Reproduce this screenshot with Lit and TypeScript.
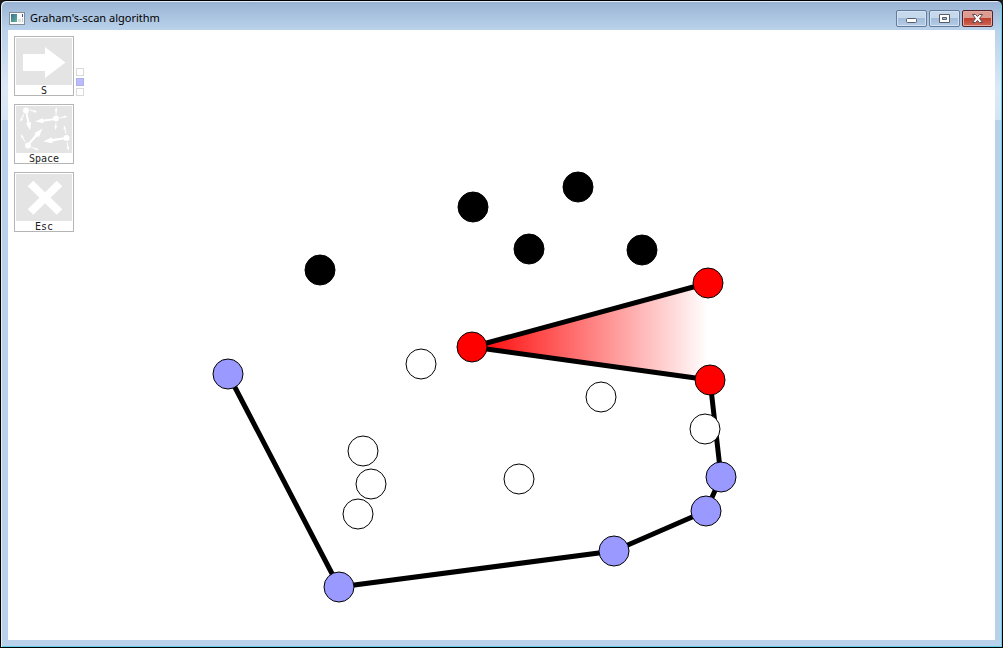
import { LitElement, html, svg, css } from "lit";
import { customElement, state } from "lit/decorators.js";

type Kind = "pending" | "active" | "hull" | "discarded";
interface Point { x: number; y: number; kind: Kind; }

const POINTS: Point[] = [
  { x: 465, y: 177, kind: "pending" },
  { x: 570, y: 157, kind: "pending" },
  { x: 521, y: 219, kind: "pending" },
  { x: 634, y: 220, kind: "pending" },
  { x: 312, y: 240, kind: "pending" },
  { x: 413, y: 334, kind: "discarded" },
  { x: 593, y: 367, kind: "discarded" },
  { x: 697, y: 399, kind: "discarded" },
  { x: 355, y: 421, kind: "discarded" },
  { x: 363, y: 454, kind: "discarded" },
  { x: 350, y: 484, kind: "discarded" },
  { x: 511, y: 449, kind: "discarded" },
  { x: 220, y: 344, kind: "hull" },
  { x: 331, y: 557, kind: "hull" },
  { x: 606, y: 521, kind: "hull" },
  { x: 698, y: 481, kind: "hull" },
  { x: 713, y: 447, kind: "hull" },
  { x: 702, y: 350, kind: "active" },
  { x: 464, y: 317, kind: "active" },
  { x: 700, y: 253, kind: "active" },
];

const chain = POINTS.filter((p) => p.kind === "hull" || p.kind === "active");
const wedge = POINTS.filter((p) => p.kind === "active");
const toPath = (list: Point[]) => list.map((p) => `${p.x},${p.y}`).join(" ");

const arrowIcon = svg`<path d="M7 16h22V9l20.500 15.500L29 40v-7H7z" fill="#fff"/>`;

const scatterArrow = (x: number, y: number, angle: number, length: number, head: number) => svg`
  <path transform="translate(${x} ${y}) rotate(${angle})" fill="#fff"
    d="M0 ${-head / 10}L${length - head} ${-head / 7}V${-head / 3}L${length} 0L${length - head} ${head / 3}V${head / 7}L0 ${head / 10}z"/>`;

const scatterIcon = svg`
  <g fill="#fff">
    <circle cx="10" cy="4.500" r="3"/><circle cx="40" cy="12.500" r="3"/>
    <circle cx="12" cy="39.500" r="3"/><circle cx="50.500" cy="32" r="3"/>
  </g>
  ${scatterArrow(10, 5, 78, 20, 8)}
  ${scatterArrow(40, 13, 173, 21, 8)}
  ${scatterArrow(12, 39, -49, 22, 9)}
  ${scatterArrow(50, 32, 171, 23, 9)}
  ${scatterArrow(14, 4, 16, 8, 4)}
  ${scatterArrow(8, 8, 115, 9, 4)}
  ${scatterArrow(40, 9, -88, 8, 4)}
  ${scatterArrow(44, 12, -15, 8, 4)}
  ${scatterArrow(40, 17, 95, 7, 4)}
  ${scatterArrow(9, 36, -118, 9, 4)}
  ${scatterArrow(15, 41, 22, 9, 4)}
  ${scatterArrow(50, 28, -103, 9, 4)}
  ${scatterArrow(51, 36, 80, 9, 4)}`;

const crossIcon = svg`<path d="M14.500 9.500L43.500 38M43.500 9.500L14.500 38" stroke="#fff" stroke-width="8" fill="none"/>`;

@customElement("tool-button")
class ToolButton extends LitElement {
  static properties = { icon: { attribute: false }, key: {} };
  declare icon: unknown;
  declare key: string;

  static styles = css`
    :host { display: block; }
    .tool {
      display: flex;
      flex-direction: column;
      box-sizing: border-box;
      width: 60px;
      height: 60px;
      padding: 1px;
      border: 1px solid #b5b5b5;
      background: #fff;
      color: #222;
      font: 10px/12px "DejaVu Sans Mono", "Liberation Mono", monospace;
      text-align: center;
    }
    .icon { display: block; flex: none; width: 56px; height: 47px; background: #e4e4e4; }
    .tool:focus-visible { outline: 1px dotted #555; }
  `;

  render() {
    return html`<button class="tool">
      <svg class="icon" viewBox="0 0 56 47" aria-hidden="true">${this.icon}</svg>
      <span>${this.key}</span>
    </button>`;
  }
}

@customElement("hull-canvas")
class HullCanvas extends LitElement {
  static styles = css`
    :host { display: block; min-width: 0; min-height: 0; }
    .plot { display: block; width: 100%; height: 100%; }
    .chain { fill: none; stroke: #000; stroke-width: 5; stroke-linejoin: round; }
    .point { stroke: #000; stroke-width: 1; }
    .pending { fill: #000; }
    .active { fill: #f00; }
    .hull { fill: #9999ff; }
    .discarded { fill: #fff; }
  `;

  render() {
    return html`<svg class="plot" role="img" aria-label="Convex hull points">
      <defs>
        <linearGradient id="turn" gradientUnits="userSpaceOnUse" x1="464" y1="0" x2="700" y2="0">
          <stop offset="0" stop-color="#f00"/><stop offset="1" stop-color="#fff"/>
        </linearGradient>
      </defs>
      <polygon points=${toPath(wedge)} fill="url(#turn)"/>
      <polyline class="chain" points=${toPath(chain)}/>
      ${POINTS.map((p) => svg`<circle class="point ${p.kind}" cx=${p.x} cy=${p.y} r="15"/>`)}
    </svg>`;
  }
}

@customElement("app-root")
class AppRoot extends LitElement {
  @state() private speed = 1;

  static styles = css`
    :host { display: block; height: 100vh; background: #1c1c20; }
    .window {
      display: grid;
      grid-template-rows: 28px minmax(0, 1fr);
      box-sizing: border-box;
      height: 100%;
      padding: 0 6px 7px;
      border: 1px solid #000;
      border-radius: 6px 6px 0 0;
      background:
        linear-gradient(#98b3d3, #b9d1ea 28px, #dbe8f6 88px, #d5e4f4 119px, #b9d1ea 119px);
      box-shadow: inset 1px 1px #e3edf8, inset -1px -1px #60cfe8;
    }
    .titlebar { display: flex; align-items: flex-start; padding: 0 3px 0 2px; }
    .app-icon { flex: none; width: 16px; height: 14px; margin: 10px 5px 0 0; }
    .title {
      flex: 1;
      margin: 0;
      padding-top: 8px;
      overflow: hidden;
      white-space: nowrap;
      color: #000;
      font: 400 11px/18px "Noto Sans", "Open Sans", sans-serif;
    }
    .controls { display: flex; gap: 2px; padding-top: 9px; }
    .control {
      display: grid;
      place-items: center;
      box-sizing: border-box;
      width: 31px;
      height: 17px;
      padding: 0;
      border: 1px solid #647b99;
      border-radius: 2px;
      background: linear-gradient(#c6d8eb 45%, #a3bcda 50%, #b5cce6);
      box-shadow: inset 0 0 0 1px #d4e3f3;
    }
    .close {
      border-color: #54202a;
      background: linear-gradient(#dc9c91 45%, #bd4030 50%, #cf6754);
      box-shadow: inset 0 0 0 1px #e2aaa1;
    }
    .glyph { display: block; width: 13px; height: 11px; }
    .client {
      display: grid;
      grid-template: minmax(0, 1fr) / minmax(0, 1fr);
      margin: 1px 1px 0;
      background: #fff;
    }
    .client > * { grid-area: 1 / 1; }
    .tools {
      z-index: 1;
      display: grid;
      grid-template-columns: 60px 8px;
      gap: 8px 2px;
      justify-self: start;
      align-self: start;
      padding: 6px;
    }
    .tools > tool-button { grid-column: 1; }
    .speeds {
      display: grid;
      gap: 2px;
      align-self: end;
      margin: 0;
      padding: 0;
      border: 0;
    }
    .speed {
      appearance: none;
      box-sizing: border-box;
      width: 8px;
      height: 8px;
      margin: 0;
      border: 1px solid #d9d9d9;
      background: #fff;
    }
    .speed:checked { border-color: #b0b0e8; background: #bbbbff; }
  `;

  render() {
    return html`<main class="window">
      <header class="titlebar">
        <svg class="app-icon" viewBox="0 0 16 14" aria-hidden="true">
          <defs>
            <linearGradient id="pane" x1="0" y1="0" x2="1" y2="1">
              <stop offset="0" stop-color="#3d6e96"/><stop offset="1" stop-color="#61b392"/>
            </linearGradient>
          </defs>
          <rect x="0.500" y="1.500" width="15" height="12" fill="#fafafa" stroke="#858b92"/>
          <rect x="2" y="3" width="6" height="8" fill="url(#pane)"/>
          <rect x="9" y="8" width="3" height="3" fill="#dcdfe2"/>
          <path d="M13.500 3v3" stroke="#355b88"/>
          <path d="M13.500 7v4" stroke="#c9d0d7"/>
        </svg>
        <h1 class="title">Graham's-scan algorithm</h1>
        <div class="controls">
          <button class="control" aria-label="Minimize">
            <svg class="glyph" viewBox="0 0 13 11"><rect x="1.500" y="5.500" width="10" height="4" rx="1" fill="#fff" stroke="#555d69"/></svg>
          </button>
          <button class="control" aria-label="Maximize">
            <svg class="glyph" viewBox="0 0 13 11"><path d="M1.500 1.500h10v8h-10zM4.500 4.500v2h4v-2z" fill="#fff" fill-rule="evenodd" stroke="#555d69" stroke-linejoin="round"/></svg>
          </button>
          <button class="control close" aria-label="Close">
            <svg class="glyph" viewBox="0 0 13 11"><path d="M1.500 1.500h3l2 2 2-2h3L8.500 5.500l3 4h-3l-2-2-2 2h-3l3-4z" fill="#fff" stroke="#5c4650" stroke-linejoin="round"/></svg>
          </button>
        </div>
      </header>
      <section class="client">
        <hull-canvas></hull-canvas>
        <nav class="tools" aria-label="Tools">
          <tool-button .icon=${arrowIcon} .key=${"S"}></tool-button>
          <fieldset class="speeds" aria-label="Step mode">
            ${[0, 1, 2].map((n) => html`<input class="speed" type="radio" name="speed" aria-label="Mode ${n + 1}"
              .checked=${this.speed === n} @change=${() => (this.speed = n)}>`)}
          </fieldset>
          <tool-button .icon=${scatterIcon} .key=${"Space"}></tool-button>
          <tool-button .icon=${crossIcon} .key=${"Esc"}></tool-button>
        </nav>
      </section>
    </main>`;
  }
}
